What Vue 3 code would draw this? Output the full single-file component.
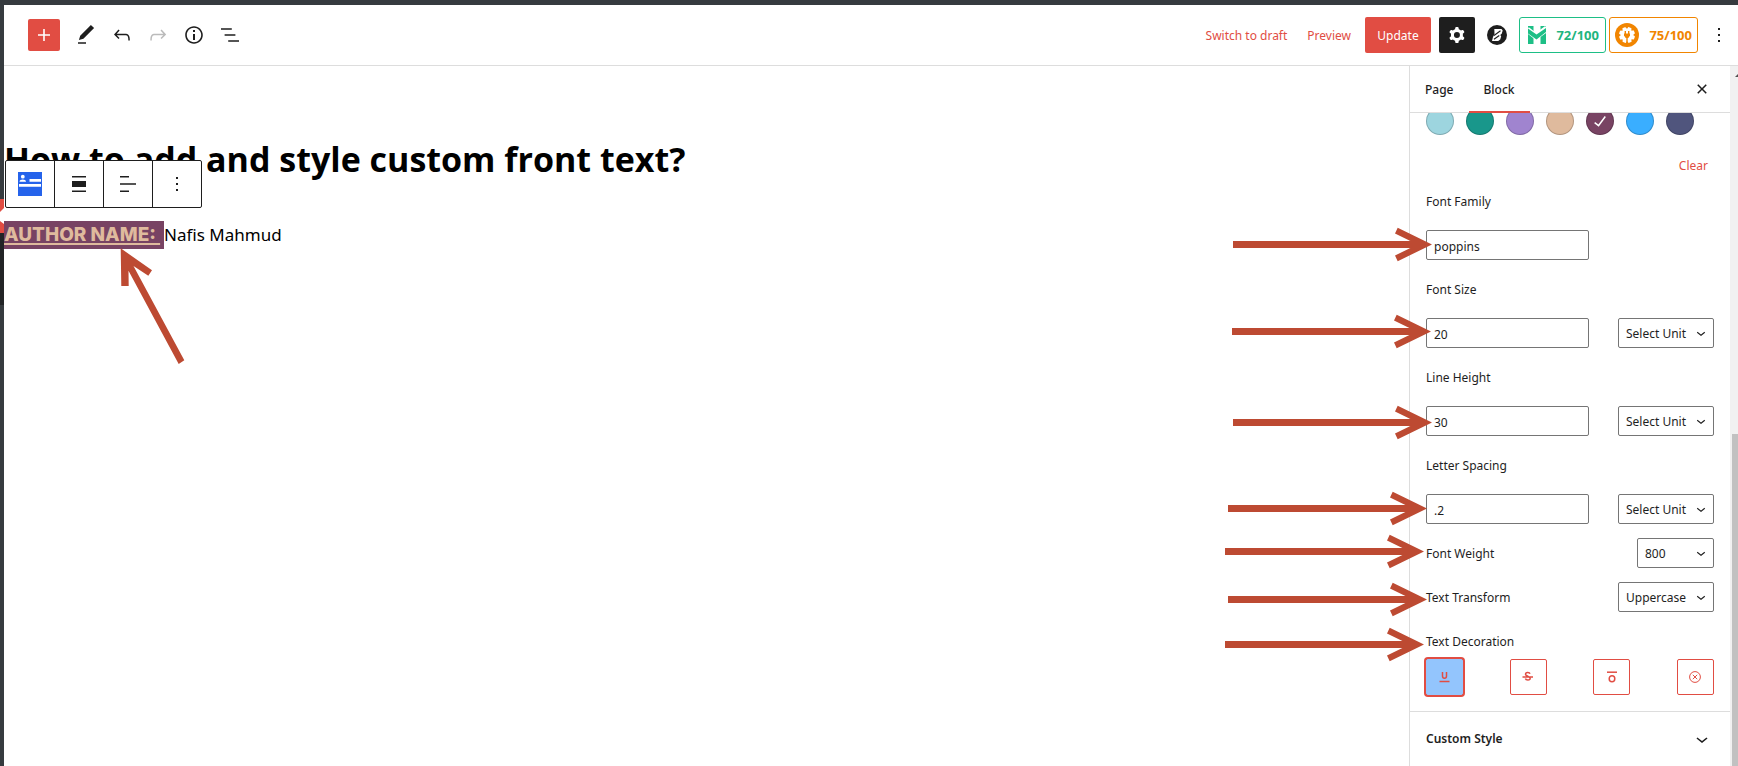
<script setup>
import { ref } from 'vue'

const icons = {
  plus: 'M18 11.2h-5.2V6h-1.6v5.2H6v1.6h5.2V18h1.6v-5.2H18z',
  edit: 'M20.1 5.1L16.9 2 6.2 12.7l-1.3 4.4 4.5-1.3L20.1 5.1zM4 20.8h8v-1.5H4v1.5z',
  undo: 'M18.3 11.7c-.6-.6-1.4-.9-2.3-.9H6.7l2.9-3.3-1.1-1-4.5 5L8.5 16l1-1-2.7-2.7H16c.5 0 .9.2 1.3.5 1 1 1 3.4 1 4.5v.3h1.5v-.2c0-1.5 0-4.3-1.5-5.7z',
  redo: 'M15.6 6.5l-1.1 1 2.9 3.3H8c-.9 0-1.7.3-2.3.9-1.4 1.5-1.4 4.2-1.4 5.6v.2h1.5v-.3c0-1.1 0-3.5 1-4.5.3-.3.7-.5 1.3-.5h9.2L14.5 15l1.1 1.1 4.6-4.6-4.6-5z',
  info: 'M12 3.2c-4.8 0-8.8 3.9-8.8 8.8 0 4.8 3.9 8.8 8.8 8.8 4.8 0 8.8-3.9 8.8-8.8 0-4.8-4-8.8-8.8-8.8zm0 16c-4 0-7.2-3.3-7.2-7.2C4.8 8 8 4.8 12 4.8s7.2 3.3 7.2 7.2c0 4-3.2 7.2-7.2 7.2zM11 17h2v-6h-2v6zm0-8h2V7h-2v2z',
  list: 'M13.8 5.2H3v1.5h10.8V5.2zm-3.6 12v1.5H21v-1.5H10.2zm7.2-6H6.6v1.5h10.8v-1.5z',
  cog: 'M10.289 4.836A1 1 0 0111.275 4h1.306a1 1 0 01.987.836l.244 1.466c.787.26 1.503.679 2.108 1.218l1.393-.522a1 1 0 011.216.437l.653 1.13a1 1 0 01-.23 1.273l-1.148.944a6.025 6.025 0 010 2.435l1.149.946a1 1 0 01.23 1.272l-.653 1.13a1 1 0 01-1.216.437l-1.394-.522c-.605.54-1.32.958-2.108 1.218l-.244 1.466a1 1 0 01-.987.836h-1.306a1 1 0 01-.986-.836l-.244-1.466a5.995 5.995 0 01-2.108-1.218l-1.394.522a1 1 0 01-1.217-.436l-.653-1.131a1 1 0 01.23-1.272l1.149-.946a6.026 6.026 0 010-2.435l-1.148-.944a1 1 0 01-.23-1.272l.653-1.131a1 1 0 011.217-.437l1.393.522a5.994 5.994 0 012.108-1.218l.244-1.466zM14.929 12a3 3 0 11-6 0 3 3 0 016 0z',
  more: 'M13 19h-2v-2h2v2zm0-6h-2v-2h2v2zm0-6h-2V5h2v2z',
  close: 'M12 13.06l3.712 3.713 1.061-1.06L13.061 12l3.712-3.712-1.06-1.06L12 10.938 8.288 7.227l-1.061 1.06L10.939 12l-3.712 3.712 1.06 1.061L12 13.061z',
  chevron: 'M17.5 11.6L12 16l-5.5-4.4.9-1.2L12 14l4.5-3.6 1 1.2z',
  check: 'M16.7 7.1l-6.3 8.5-3.3-2.5-.9 1.2 4.5 3.4L17.9 8z',
}

const tools = [
  { name: 'Tools', icon: 'edit' },
  { name: 'Undo', icon: 'undo' },
  { name: 'Redo', icon: 'redo', disabled: true },
  { name: 'Details', icon: 'info' },
  { name: 'List View', icon: 'list' },
]

const swatches = [
  { color: '#9dd5df' },
  { color: '#19978b' },
  { color: '#a084cf' },
  { color: '#dfba9d' },
  { color: '#784363', checked: true },
  { color: '#3aaeff' },
  { color: '#50557d' },
]

const fields = ref([
  { id: 'font-family', label: 'Font Family', value: 'poppins', unit: false },
  { id: 'font-size', label: 'Font Size', value: '20', unit: true },
  { id: 'line-height', label: 'Line Height', value: '30', unit: true },
  { id: 'letter-spacing', label: 'Letter Spacing', value: '.2', unit: true },
])

const arrows = [
  { x: 412, y: 244.5 },
  { x: 411, y: 331.5 },
  { x: 412, y: 422.5 },
  { x: 407, y: 508.5 },
  { x: 404, y: 551.5 },
  { x: 407, y: 599.5 },
  { x: 404, y: 644.5 },
]
</script>

<template>
  <div class="app">
    <div class="rail" aria-hidden="true">
      <div class="rail-current"><svg width="4" height="34" viewBox="0 0 4 34"><path d="M4 9L0 13v9l4 3z" fill="#fff" /></svg></div>
      <div class="rail-sub"></div>
    </div>
    <div class="editor">
      <header class="header">
        <div class="tools">
          <button class="add" type="button" aria-label="Add block">
            <svg width="24" height="24" viewBox="0 0 24 24"><path :d="icons.plus" /></svg>
          </button>
          <button v-for="t in tools" :key="t.name" class="tool" type="button" :aria-label="t.name" :disabled="t.disabled">
            <svg width="24" height="24" viewBox="0 0 24 24"><path :d="icons[t.icon]" /></svg>
          </button>
        </div>
        <div class="actions">
          <button class="link" type="button">Switch to draft</button>
          <button class="link" type="button">Preview</button>
          <button class="update" type="button">Update</button>
          <button class="settings" type="button" aria-label="Settings">
            <svg width="24" height="24" viewBox="0 0 24 24"><path :d="icons.cog" fill-rule="evenodd" /></svg>
          </button>
          <button class="brand" type="button" aria-label="Blocks">
            <svg width="20" height="20" viewBox="0 0 20 20">
              <circle cx="10" cy="10" r="10" fill="#1e1e1e" />
              <path d="M7.300 4h7.200l1.200 1.500-1 3.300L13.200 10l1 1.300-1 3.200L11.200 16H5l1-4 1.500-3z" fill="#fff" />
              <path d="M13.500 5.700L7 10.500M12.300 10.500L7 14.300" stroke="#1e1e1e" stroke-width="1.100" fill="none" />
            </svg>
          </button>
          <div class="scores">
            <button class="score seo" type="button">
              <svg width="18" height="18" viewBox="0 0 18 18">
                <path d="M0 0h5.500v18H0zM12.500 0H18v18h-5.500z" fill="#1dbf86" />
                <path d="M-1 3.500l9 7L19 2.500" fill="none" stroke="#fff" stroke-width="6" />
                <path d="M0 2.500v5L8.500 13.500 18 6V2L8.500 8.500z" fill="#1dbf86" />
              </svg>
              <span>72/100</span>
            </button>
            <button class="score content" type="button">
              <svg width="24" height="24" viewBox="0 0 24 24">
                <circle cx="12" cy="12" r="12" fill="#f18500" />
                <g fill="#fff">
                  <circle cx="12" cy="12" r="6.500" />
                  <rect v-for="a in 8" :key="a" x="10" y="4" width="4" height="4" rx="1" :transform="`rotate(${a * 45 + 22} 12 12)`" />
                </g>
                <path d="M10.300 8v3M13.700 8v3M12 14v6" stroke="#f18500" stroke-width="1.400" />
                <path d="M9 10.500h6v2L13.300 15h-2.600L9 12.500z" fill="#f18500" />
              </svg>
              <span>75/100</span>
            </button>
          </div>
          <button class="options" type="button" aria-label="Options">
            <svg width="24" height="24" viewBox="0 0 24 24"><path :d="icons.more" /></svg>
          </button>
        </div>
      </header>

      <div class="body">
        <main class="canvas">
          <h1 class="title">How to add and style custom front text?</h1>
          <div class="toolbar" role="toolbar" aria-label="Block tools">
            <button type="button" aria-label="Front text">
              <svg width="24" height="24" viewBox="0 0 24 24">
                <rect width="24" height="24" fill="#2563eb" />
                <circle cx="4.800" cy="4.700" r="1.900" fill="#fff" />
                <path d="M1.500 9.800c0-3.200 6.500-3.200 6.500 0z" fill="#fff" />
                <path d="M11.500 7h11.500v2.700H11.500zM1 12h22v2.700H1z" fill="#fff" />
              </svg>
            </button>
            <button type="button" aria-label="Align">
              <svg width="24" height="24" viewBox="0 0 24 24"><path d="M5 4h14v1.500H5zM5 9h14v6H5zM5 18.500h14V20H5z" /></svg>
            </button>
            <button type="button" aria-label="Text alignment">
              <svg width="24" height="24" viewBox="0 0 24 24"><path d="M4 4h9v1.500H4zM4 11.200h16v1.500H4zM4 18.500h9V20H4z" /></svg>
            </button>
            <button type="button" aria-label="More options">
              <svg width="24" height="24" viewBox="0 0 24 24"><path :d="icons.more" /></svg>
            </button>
          </div>
          <p class="author"><mark>Author Name:&nbsp;</mark><span>Nafis Mahmud</span></p>
          <svg class="note" width="70" height="120" viewBox="0 0 70 120" aria-hidden="true">
            <path d="M.7 .3L32 22.300 28.300 27.700 13.500 18 64.300 112.300 58.700 116 8.500 22.700 8.700 38H1.300z" fill="#bd4a32" />
          </svg>
        </main>

        <aside class="sidebar">
          <div class="tabs">
            <button class="tab" type="button">Page</button>
            <button class="tab active" type="button">Block</button>
            <button class="close" type="button" aria-label="Close settings">
              <svg width="24" height="24" viewBox="0 0 24 24"><path :d="icons.close" /></svg>
            </button>
          </div>
          <div class="panel">
            <div class="swatches">
              <button v-for="s in swatches" :key="s.color" class="swatch" type="button" :aria-label="s.color" :style="{ background: s.color }">
                <svg v-if="s.checked" width="24" height="24" viewBox="0 0 24 24"><path :d="icons.check" /></svg>
              </button>
            </div>
            <button class="clear" type="button">Clear</button>
            <div class="fields">
              <template v-for="f in fields" :key="f.id">
                <label class="label" :for="f.id">{{ f.label }}</label>
                <div class="row">
                  <input :id="f.id" v-model="f.value" class="text" type="text" />
                  <div v-if="f.unit" class="select unit">
                    <select :aria-label="f.label + ' unit'"><option>Select Unit</option></select>
                    <svg width="18" height="18" viewBox="0 0 24 24"><path :d="icons.chevron" /></svg>
                  </div>
                </div>
              </template>
              <div class="row">
                <label class="label" for="weight">Font Weight</label>
                <div class="select weight">
                  <select id="weight"><option>800</option></select>
                  <svg width="18" height="18" viewBox="0 0 24 24"><path :d="icons.chevron" /></svg>
                </div>
              </div>
              <div class="row">
                <label class="label" for="transform">Text Transform</label>
                <div class="select unit">
                  <select id="transform"><option>Uppercase</option></select>
                  <svg width="18" height="18" viewBox="0 0 24 24"><path :d="icons.chevron" /></svg>
                </div>
              </div>
              <div class="decoration">
                <div id="decoration" class="label">Text Decoration</div>
                <div class="row" role="group" aria-labelledby="decoration">
                  <button class="deco active" type="button" aria-label="Underline">
                    <svg width="12" height="12" viewBox="0 0 12 12"><path d="M3.500 1v4c0 3 4 3 4 0V1M.5 10.500h10" /></svg>
                  </button>
                  <button class="deco" type="button" aria-label="Line through">
                    <svg width="12" height="12" viewBox="0 0 12 12"><path d="M8 2.800C7.500 1 3.500 1.200 3.500 3.200S8.200 5.300 8.200 7.500 3.800 9.500 3.400 7.500M.5 6h10.500" /></svg>
                  </button>
                  <button class="deco" type="button" aria-label="Overline">
                    <svg width="12" height="12" viewBox="0 0 12 12"><path d="M1 1.200h10" /><ellipse cx="6" cy="7.700" rx="2.800" ry="3" /></svg>
                  </button>
                  <button class="deco thin" type="button" aria-label="None">
                    <svg width="12" height="12" viewBox="0 0 12 12"><circle cx="6" cy="6" r="5.400" /><path d="M3.800 3.800l4.400 4.400M8.200 3.800L3.800 8.200" /></svg>
                  </button>
                </div>
              </div>
            </div>
            <button class="custom" type="button">
              <span>Custom Style</span>
              <svg width="24" height="24" viewBox="0 0 24 24"><path :d="icons.chevron" /></svg>
            </button>
          </div>
        </aside>
        <div class="scrollbar" aria-hidden="true">
          <svg width="8" height="20" viewBox="0 0 8 20"><path d="M8 8v3H5z" fill="#505050" /></svg>
          <div class="thumb"></div>
        </div>
      </div>
    </div>
    <svg class="arrows" width="718" height="766" viewBox="0 0 718 766" aria-hidden="true">
      <path v-for="a in arrows" :key="a.y" :transform="`translate(${a.x} ${a.y})`" d="M-199-3.500H-21.600L-37-11-34.300-16.700 0 0-34.300 16.700-37 11-21.600 3.500H-199z" fill="#bd4a32" />
    </svg>
  </div>
</template>

<style>
body {
  margin: 0;
}
</style>

<style scoped>
.app {
  position: relative;
  display: flex;
  height: 100vh;
  box-sizing: border-box;
  padding-top: 5px;
  overflow: hidden;
  background: #363b3f;
  color: #1e1e1e;
  font-family: "Noto Sans", "Open Sans", sans-serif;
  font-size: 12px;
  line-height: 20px;
}
button,
input,
select {
  margin: 0;
  padding: 0;
  box-sizing: border-box;
  border: 0;
  background: none;
  color: inherit;
  font: inherit;
}
svg {
  display: block;
  flex: none;
  fill: currentColor;
}
.rail {
  flex: none;
  width: 4px;
  padding-top: 194px;
}
.rail-current {
  height: 34px;
  background: #e14d43;
}
.rail-sub {
  height: 72px;
  background: #222426;
}
.editor {
  flex: 1;
  min-width: 0;
  display: flex;
  flex-direction: column;
  background: #fff;
}
.header {
  display: flex;
  align-items: center;
  justify-content: space-between;
  height: 60px;
  flex: none;
  border-bottom: 1px solid #ddd;
  padding: 0 7px 0 24px;
}
.tools,
.actions,
.scores {
  display: flex;
  align-items: center;
}
.add,
.tool,
.settings,
.options,
.brand,
.close {
  display: flex;
  align-items: center;
  justify-content: center;
}
.add {
  width: 32px;
  height: 32px;
  margin-right: 8px;
  border-radius: 2px;
  background: #e14d43;
  color: #fff;
}
.tool {
  width: 36px;
  height: 36px;
}
.tool:disabled {
  color: #bbb;
}
.link {
  padding: 2px 10px 0;
  color: #e14d43;
}
.update {
  height: 36px;
  width: 66px;
  margin: 0 8px 0 4px;
  padding-top: 2px;
  border-radius: 2px;
  background: #e14d43;
  color: #fff;
}
.settings {
  width: 36px;
  height: 36px;
  border-radius: 2px;
  background: #1e1e1e;
  color: #fff;
}
.brand {
  width: 44px;
  height: 36px;
}
.scores {
  gap: 3px;
}
.score {
  display: flex;
  align-items: center;
  justify-content: space-between;
  height: 36px;
  border: 1px solid;
  border-radius: 3px;
  font-size: 13px;
  font-weight: 700;
}
.seo {
  width: 87px;
  padding: 0 6px 0 8px;
  color: #1fb57f;
  border-color: #1dbf86;
}
.content {
  width: 89px;
  padding: 0 5px;
  color: #f18500;
}
.options {
  width: 24px;
  height: 36px;
  margin-left: 9px;
}
.body {
  flex: 1;
  min-height: 0;
  display: flex;
}
.canvas {
  position: relative;
  flex: 1;
  min-width: 0;
  padding-top: 69px;
  color: #000;
}
.title {
  margin: 0;
  font-family: "Open Sans", "Noto Sans", sans-serif;
  font-size: 34px;
  line-height: 48px;
  font-weight: 700;
}
.toolbar {
  position: absolute;
  top: 94px;
  left: 1px;
  display: flex;
  border: 1px solid #1e1e1e;
  border-radius: 2px;
  background: #fff;
}
.toolbar button {
  display: flex;
  align-items: center;
  justify-content: center;
  width: 49px;
  height: 46px;
  color: #1e1e1e;
  border-right: 1px solid #1e1e1e;
}
.toolbar button:last-child {
  border-right: 0;
  width: 48px;
}
.author {
  display: flex;
  margin: 38px 0 0;
  font-size: 17px;
  line-height: 28px;
}
.author mark {
  padding-right: 4px;
  background: #784363;
  color: #dfba9d;
  font-family: Inter, sans-serif;
  font-size: 19px;
  font-weight: 800;
  text-transform: uppercase;
  text-decoration: underline;
  text-decoration-thickness: 2px;
  text-underline-offset: 2px;
  text-decoration-skip-ink: none;
}
.note {
  position: absolute;
  top: 182px;
  left: 116px;
}
.sidebar {
  display: flex;
  flex-direction: column;
  flex: none;
  width: 320px;
  border-left: 1px solid #ddd;
}
.tabs {
  display: flex;
  flex: none;
  height: 46px;
  border-bottom: 1px solid #ddd;
}
.tab {
  height: 47px;
  padding: 0 15px;
  font-weight: 500;
}
.tab.active {
  border-bottom: 2px solid #e14d43;
  padding: 2px 15px 0;
}
.close {
  width: 24px;
  height: 46px;
  margin: 0 16px 0 auto;
}
.panel {
  flex: 1;
  min-height: 0;
  overflow: hidden;
}
.swatches {
  display: flex;
  gap: 12px;
  margin: -6px 16px 0;
}
.swatch {
  display: flex;
  align-items: center;
  justify-content: center;
  width: 28px;
  height: 28px;
  border: 1px solid rgba(0, 0, 0, 0.2);
  border-radius: 50%;
  color: #fff;
}
.clear {
  display: block;
  margin: 21px 22px 10px auto;
  color: #e14d43;
}
.fields {
  display: flex;
  flex-direction: column;
  gap: 14px;
  padding: 0 16px 16px;
}
.label {
  padding-top: 2px;
  line-height: 28px;
}
.row {
  display: flex;
  align-items: center;
  justify-content: space-between;
}
.text {
  width: 163px;
  height: 30px;
  padding: 2px 7px 0;
  border: 1px solid #757575;
  border-radius: 2px;
}
.select {
  position: relative;
}
.unit {
  width: 96px;
}
.weight {
  width: 77px;
}
.select select {
  appearance: none;
  width: 100%;
  height: 30px;
  padding: 2px 22px 0 7px;
  border: 1px solid #757575;
  border-radius: 2px;
}
.select svg {
  position: absolute;
  right: 4px;
  top: 6px;
  pointer-events: none;
}
.decoration .row {
  margin-top: 3px;
}
.deco {
  display: flex;
  align-items: center;
  justify-content: center;
  width: 37px;
  height: 36px;
  border: 1px solid #e14d43;
  border-radius: 2px;
  color: #e14d43;
}
.deco.active {
  border-color: #93c5fd;
  background: #93c5fd;
  box-shadow: 0 0 0 2px #e14d43;
}
.deco svg {
  fill: none;
  stroke: currentColor;
  stroke-width: 1.5px;
}
.deco.thin svg {
  stroke-width: 1px;
}
.custom {
  display: flex;
  align-items: center;
  justify-content: space-between;
  width: 100%;
  height: 54px;
  padding: 0 16px;
  border-top: 1px solid #ddd;
  font-size: 12px;
  font-weight: 600;
}
.scrollbar {
  flex: none;
  display: flex;
  flex-direction: column;
  width: 8px;
  background: #f1f1f1;
}
.thumb {
  margin: auto 0 0 2px;
  height: 332px;
  background: #c1c1c1;
}
.arrows {
  position: absolute;
  top: 0;
  right: 0;
  pointer-events: none;
}
</style>
